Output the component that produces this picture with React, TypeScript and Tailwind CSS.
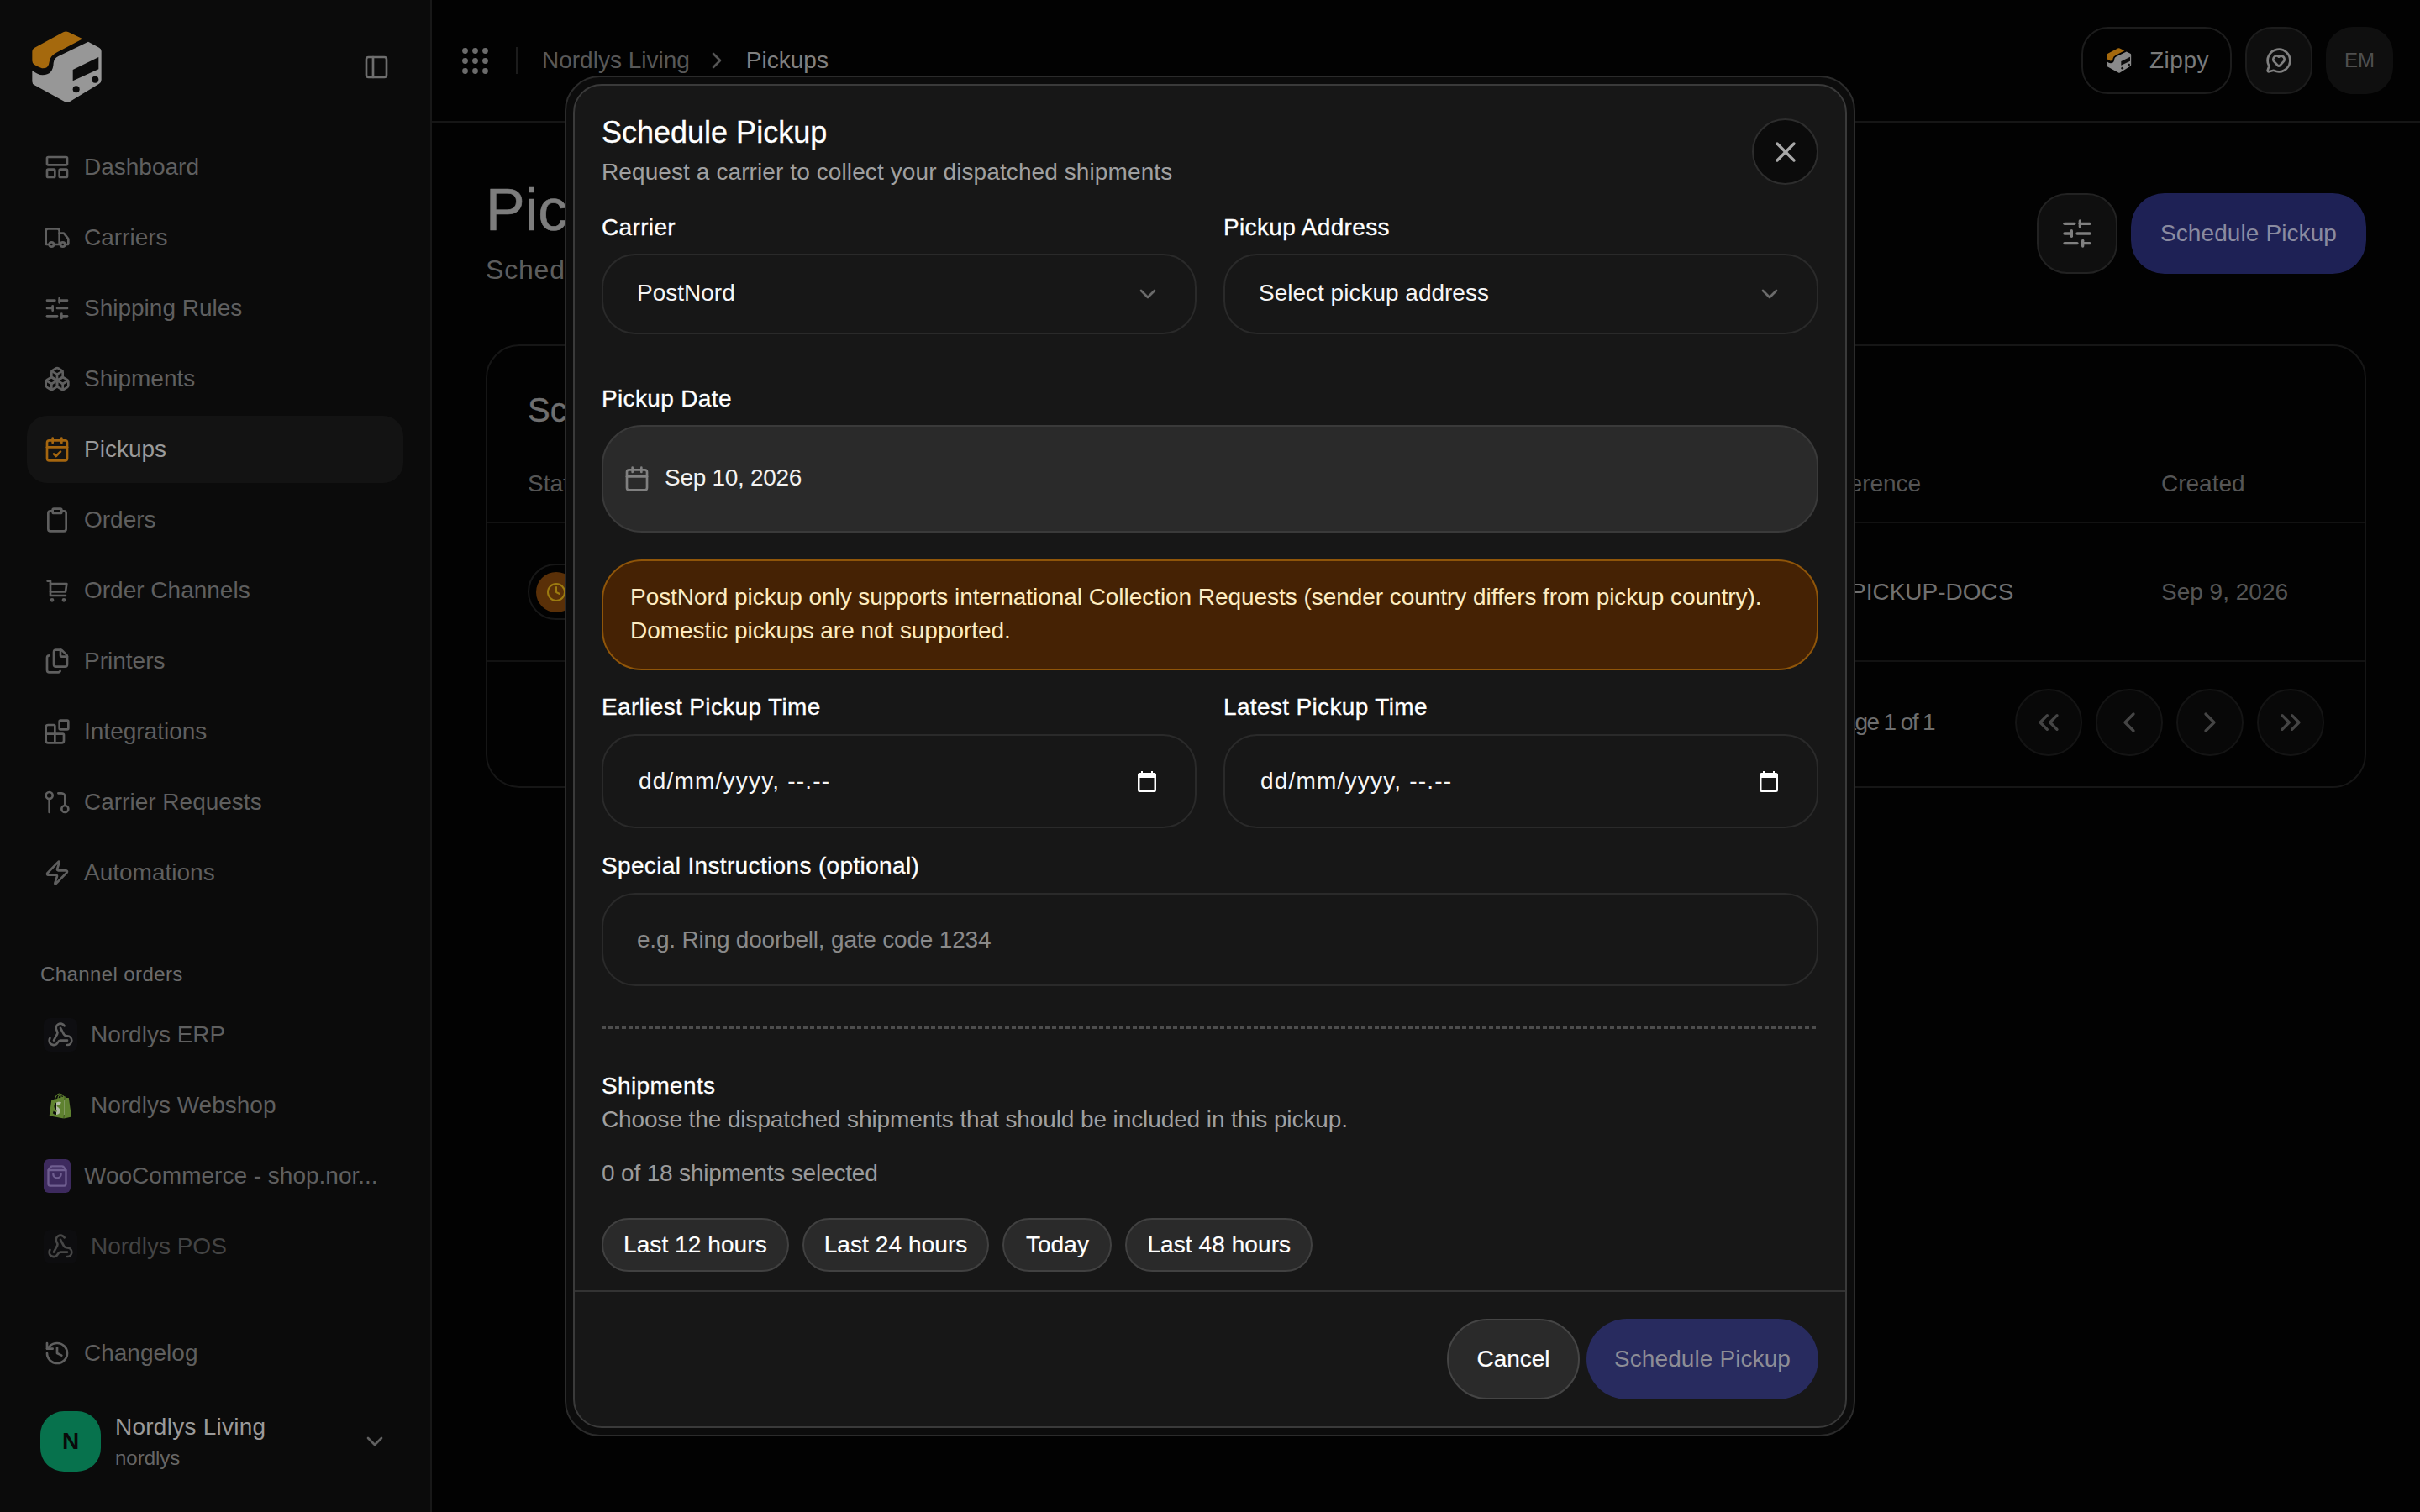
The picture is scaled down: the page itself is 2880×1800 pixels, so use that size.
import React from "react";
import {
  LayoutPanelTop, Truck, SlidersHorizontal, Boxes, CalendarCheck, Clipboard, Files, Blocks,
  Zap, History, Webhook, PanelLeft, ChevronDown, ChevronRight, ChevronLeft, ChevronsLeft,
  ChevronsRight, MessageCircleHeart, X, Calendar, Clock, ShoppingBag,
} from "lucide-react";
import { SiShopify } from "react-icons/si";

function Logo({ w, h, muted }: { w: number; h: number; muted?: boolean }) {
  return (
    <svg width={w} height={h} viewBox="114 112 252 258" className="shrink-0">
      <path d="M115 186 Q115 176 124 171 L226 116 Q235 111 245 116 L295 140 L205 187 Q178 200 176 222 Q174 246 150 245 Q132 238 122 231 Q115 226 115 218 Z" fill="#a5690d" />
      <path d="M315 150 L354 171 Q362 175 362 184 L362 286 Q362 295 354 300 L248 365 Q240 369 232 365 L123 305 Q115 301 115 292 L115 252 Q134 268 152 269 Q190 268 191 226 Q192 210 208 202 Z" fill={muted ? "#8a8a8a" : "#979797"} />
      <path d="M260 250 L352 205 L352 248 L260 290 Z" fill="#0b0b0b" />
      <circle cx="272" cy="320" r="12" fill="#0b0b0b" />
      <circle cx="340" cy="285" r="12" fill="#0b0b0b" />
    </svg>
  );
}

function NativeCalendar() {
  return (
    <svg width="22" height="25" viewBox="0 0 22 25" className="shrink-0" fill="#ffffff">
      <path
        fillRule="evenodd"
        d="M4 0h2v2h10V0h2v2h1.5A2.5 2.5 0 0 1 22 4.5v18a2.5 2.5 0 0 1-2.5 2.5h-17A2.5 2.5 0 0 1 0 22.5v-18A2.5 2.5 0 0 1 2.5 2H4V0zM2.5 8v14.5h17V8h-17z"
      />
    </svg>
  );
}

type IconProps = { size?: number; color?: string; className?: string };

function CartIcon({ size = 32, color = "currentColor", className }: IconProps) {
  return (
    <svg width={size} height={size} viewBox="0 0 24 24" fill="none" stroke={color} strokeWidth="2" strokeLinecap="round" strokeLinejoin="round" className={className}>
      <path d="M3.5 3.5H6v13h13.5" />
      <path d="M6 6h14.5l-1 7H6" />
      <circle cx="7.5" cy="20.5" r="0.8" />
      <circle cx="18" cy="20.5" r="0.8" />
    </svg>
  );
}

function RequestIcon({ size = 32, color = "currentColor", className }: IconProps) {
  return (
    <svg width={size} height={size} viewBox="0 0 24 24" fill="none" stroke={color} strokeWidth="2" strokeLinecap="round" strokeLinejoin="round" className={className}>
      <circle cx="5" cy="6" r="3" />
      <path d="M5 9v12" />
      <path d="M13 4h3a3 3 0 0 1 3 3v8" />
      <circle cx="19" cy="18" r="3" />
    </svg>
  );
}

const navItems = [
  { label: "Dashboard", Icon: LayoutPanelTop },
  { label: "Carriers", Icon: Truck },
  { label: "Shipping Rules", Icon: SlidersHorizontal },
  { label: "Shipments", Icon: Boxes },
  { label: "Pickups", Icon: CalendarCheck, active: true },
  { label: "Orders", Icon: Clipboard },
  { label: "Order Channels", Icon: CartIcon },
  { label: "Printers", Icon: Files },
  { label: "Integrations", Icon: Blocks },
  { label: "Carrier Requests", Icon: RequestIcon },
  { label: "Automations", Icon: Zap },
];

function Sidebar() {
  return (
    <aside className="flex h-full w-[514px] shrink-0 flex-col border-r-2 border-[#181818] bg-[#0b0b0b]">
      <div className="flex h-[159px] shrink-0 items-center justify-between pl-[38px] pr-[48px]">
        <Logo w={84} h={86} />
        <PanelLeft size={32} color="#6e6e6e" />
      </div>
      <nav className="flex flex-col gap-[4px] px-[32px]">
        {navItems.map(({ label, Icon, active }) => (
          <div
            key={label}
            className={`flex h-[80px] items-center gap-[16px] rounded-[24px] pl-[20px] text-[28px] ${
              active ? "bg-[#131313] text-[#9a9a9a]" : "text-[#5f5f5f]"
            }`}
          >
            <Icon size={32} color={active ? "#a5660f" : "#5f5f5f"} className="shrink-0" />
            <span>{label}</span>
          </div>
        ))}
      </nav>
      <div className="mt-[65px] pl-[48px] text-[24px] leading-[32px] tracking-[0.4px] text-[#6b6b6b]">Channel orders</div>
      <div className="mt-[16px] flex flex-col gap-[4px] px-[32px]">
        <div className="flex h-[80px] items-center gap-[16px] pl-[20px] text-[28px] text-[#5f5f5f]">
          <span className="flex h-[40px] w-[40px] items-center justify-center rounded-[8px] bg-[#0e0e11]">
            <Webhook size={32} color="#5f5f5f" />
          </span>
          <span>Nordlys ERP</span>
        </div>
        <div className="flex h-[80px] items-center gap-[21px] pl-[25px] text-[28px] text-[#5f5f5f]">
          <span className="relative flex h-[34px] w-[30px] shrink-0 items-center justify-center">
            <span className="absolute left-[10px] top-[10px] h-[18px] w-[11px] bg-[#b4bda8]" />
            <SiShopify size={33} color="#5f8230" className="relative" />
          </span>
          <span>Nordlys Webshop</span>
        </div>
        <div className="flex h-[80px] items-center gap-[16px] pl-[20px] text-[28px] text-[#5f5f5f]">
          <span className="flex h-[40px] w-[32px] shrink-0 items-center justify-center rounded-[6px] bg-[#3d2a5e]">
            <ShoppingBag size={28} color="#6f5e90" />
          </span>
          <span className="whitespace-nowrap">WooCommerce - shop.nor...</span>
        </div>
        <div className="flex h-[80px] items-center gap-[16px] pl-[20px] text-[28px] text-[#444444]">
          <span className="flex h-[40px] w-[40px] items-center justify-center rounded-[8px] bg-[#0d0d0f]">
            <Webhook size={32} color="#474747" />
          </span>
          <span>Nordlys POS</span>
        </div>
      </div>
      <div className="mt-auto px-[32px]">
        <div className="flex h-[80px] items-center gap-[16px] pl-[20px] text-[28px] text-[#5f5f5f]">
          <History size={32} color="#5f5f5f" />
          <span>Changelog</span>
        </div>
      </div>
      <div className="mb-[48px] mt-[29px] flex h-[72px] items-center pl-[48px] pr-[50px]">
        <span className="flex h-[72px] w-[72px] shrink-0 items-center justify-center rounded-[28px] bg-[#07724d] text-[28px] font-bold text-[#0a0a0a]">N</span>
        <div className="ml-[17px] flex-1 pt-[3px]">
          <div className="text-[28px] leading-[36px] tracking-[0.25px] text-[#9a9a9a]">Nordlys Living</div>
          <div className="mt-[1px] text-[24px] leading-[36px] text-[#666666]">nordlys</div>
        </div>
        <ChevronDown size={32} color="#606060" />
      </div>
    </aside>
  );
}

function TopBar() {
  return (
    <header className="flex h-[146px] shrink-0 items-center border-b-2 border-[#161616] pl-[36px] pr-[32px]">
      <svg width="31" height="31" viewBox="0 0 31 31" fill="#6b6b6b" className="shrink-0">
        {[3.5, 15.5, 27.5].map((cy) =>
          [3.5, 15.5, 27.5].map((cx) => <circle key={`${cx}-${cy}`} cx={cx} cy={cy} r="3.4" />),
        )}
      </svg>
      <span className="ml-[33px] h-[32px] w-[2px] bg-[#1c1c1c]" />
      <span className="ml-[29px] text-[28px] text-[#585858]">Nordlys Living</span>
      <ChevronRight size={32} color="#555555" className="ml-[16px]" />
      <span className="ml-[19px] text-[28px] text-[#808080]">Pickups</span>
      <div className="ml-auto flex items-center gap-[16px]">
        <div className="flex h-[80px] w-[179px] items-center rounded-[32px] border-2 border-[#1c1c1c] pl-[28px] text-[28px] text-[#7a7a7a]">
          <Logo w={30} h={30} muted />
          <span className="ml-[21px] tracking-[0.5px]">Zippy</span>
        </div>
        <div className="flex h-[80px] w-[80px] items-center justify-center rounded-[32px] border-2 border-[#1c1c1c] bg-[#0e0e0e]">
          <MessageCircleHeart size={32} color="#808080" />
        </div>
        <div className="flex h-[80px] w-[80px] items-center justify-center rounded-[32px] bg-[#0f0f0f] text-[24px] text-[#4f4f4f]">EM</div>
      </div>
    </header>
  );
}

function Content() {
  return (
    <main className="flex-1 px-[64px] pt-[64px]">
      <div className="flex items-start justify-between">
        <div className="pt-[2px]">
          <h1 className="text-[70px] leading-[76px] text-[#7d7d7d] [-webkit-text-stroke:0.6px_#7d7d7d]">Pickups</h1>
          <p className="mt-[13px] text-[32px] leading-[40px] tracking-[0.8px] text-[#5d5d5d]">Schedule carrier collections</p>
        </div>
        <div className="mt-[20px] flex gap-[16px]">
          <div className="flex h-[96px] w-[96px] items-center justify-center rounded-[36px] border-2 border-[#222222] bg-[#0f0f0f]">
            <SlidersHorizontal size={40} color="#808080" />
          </div>
          <div className="flex h-[96px] w-[280px] items-center justify-center rounded-[40px] bg-[#1e2155] text-[28px] tracking-[0.1px] text-[#8a8ba0]">Schedule Pickup</div>
        </div>
      </div>
      <section className="mt-[69px] h-[528px] rounded-[40px] border-2 border-[#161616]">
        <h2 className="pl-[48px] pt-[52px] text-[40px] leading-[48px] text-[#6f6f6f] [-webkit-text-stroke:0.4px_#6f6f6f]">Scheduled</h2>
        <div className="mt-[19px] grid h-[92px] grid-cols-[1529px_415px_1fr] items-center border-b-2 border-[#121212] pl-[48px] text-[28px] text-[#555555]">
          <span>Status</span>
          <span>Reference</span>
          <span>Created</span>
        </div>
        <div className="grid h-[165px] grid-cols-[1529px_415px_1fr] items-center border-b-2 border-[#121212] pl-[48px] text-[28px]">
          <span className="flex h-[67px] w-[140px] items-center rounded-full border-2 border-[#171717] pl-[8px]">
            <span className="flex h-[48px] w-[48px] items-center justify-center rounded-full bg-[#5a3008]">
              <Clock size={24} color="#9c7b10" />
            </span>
          </span>
          <span className="pl-[45px] text-[#707070]">PICKUP-DOCS</span>
          <span className="text-[#555555]">Sep 9, 2026</span>
        </div>
        <div className="flex h-[144px] items-center justify-end pr-[48px]">
          <span className="mr-[96px] text-[28px] tracking-[-1.6px] text-[#6e6e6e]">Page 1 of 1</span>
          <div className="flex gap-[16px]">
            {[ChevronsLeft, ChevronLeft, ChevronRight, ChevronsRight].map((Icon, i) => (
              <span key={i} className="flex h-[80px] w-[80px] items-center justify-center rounded-full border-2 border-[#141414] bg-[#080808]">
                <Icon size={40} color="#454545" />
              </span>
            ))}
          </div>
        </div>
      </section>
    </main>
  );
}

const labelCls = "text-[28px] leading-[40px] tracking-[0.35px] text-white [-webkit-text-stroke:0.3px_#ffffff]";

function SelectField({ label, value }: { label: string; value: string }) {
  return (
    <div className="flex flex-col gap-[11px]">
      <div className={labelCls}>{label}</div>
      <div className="flex h-[96px] items-center justify-between rounded-[40px] border-2 border-[#2a2a2a] pl-[40px] pr-[40px] text-[28px] text-[#f5f5f5]">
        <span className="-mt-[2px]">{value}</span>
        <ChevronDown size={32} color="#6b6b6b" />
      </div>
    </div>
  );
}

function DateTimeField({ label }: { label: string }) {
  return (
    <div className="flex flex-col gap-[12px]">
      <div className={labelCls}>{label}</div>
      <div className="flex h-[112px] items-center justify-between rounded-[40px] border-2 border-[#2a2a2a] pl-[42px] pr-[46px] text-[28px] tracking-[1.2px] text-[#f5f5f5]">
        <span>dd/mm/yyyy, --.--</span>
        <NativeCalendar />
      </div>
    </div>
  );
}

function Modal() {
  return (
    <div className="absolute left-[672px] top-[90px] h-[1620px] w-[1536px] rounded-[42px] border-2 border-[#2b2b2b] bg-[#0c0c0c] p-[8px]">
      <div className="flex h-full flex-col overflow-hidden rounded-[34px] border-2 border-[#3a3a3a] bg-[#171717]">
        <div className="min-h-0 flex-1 px-[32px] pt-[36px]">
          <div className="flex items-start justify-between">
            <div>
              <h2 className="text-[36px] leading-[40px] text-white [-webkit-text-stroke:0.3px_#ffffff]">Schedule Pickup</h2>
              <p className="mt-[7px] text-[28px] leading-[40px] tracking-[0.1px] text-[#a0a0a0]">Request a carrier to collect your dispatched shipments</p>
            </div>
            <button className="mt-[3px] flex h-[79px] w-[79px] items-center justify-center rounded-full border-2 border-[#2d2d2d] bg-[#0b0b0b]">
              <X size={40} color="#a8a8a8" />
            </button>
          </div>
          <div className="mt-[26px] grid grid-cols-2 gap-[32px]">
            <SelectField label="Carrier" value="PostNord" />
            <SelectField label="Pickup Address" value="Select pickup address" />
          </div>
          <div className="mt-[57px] flex flex-col gap-[11px]">
            <div className={labelCls}>Pickup Date</div>
            <div className="flex h-[128px] items-center rounded-[48px] border-2 border-[#3a3a3a] bg-[#2a2a2a] pl-[24px] text-[28px] tracking-[-0.3px] text-[#f2f2f2]">
              <Calendar size={32} color="#808080" />
              <span className="ml-[17px] -mt-[2px]">Sep 10, 2026</span>
            </div>
          </div>
          <div className="mt-[32px] h-[132px] rounded-[48px] border-2 border-[#8f5509] bg-[#452204] px-[32px] py-[23px] text-[28px] leading-[40px] tracking-[-0.05px] text-[#fdecc0]">
            PostNord pickup only supports international Collection Requests (sender country differs from pickup country).
            <br />
            Domestic pickups are not supported.
          </div>
          <div className="mt-[24px] grid grid-cols-2 gap-[32px]">
            <DateTimeField label="Earliest Pickup Time" />
            <DateTimeField label="Latest Pickup Time" />
          </div>
          <div className="mt-[25px] flex flex-col gap-[12px]">
            <div className={labelCls}>Special Instructions (optional)</div>
            <div className="flex h-[111px] items-center rounded-[40px] border-2 border-[#2a2a2a] pl-[40px] text-[28px] tracking-[-0.2px] text-[#8a8a8a]">
              e.g. Ring doorbell, gate code 1234
            </div>
          </div>
          <div className="mt-[47px] h-[4px] bg-[repeating-linear-gradient(90deg,#4d4d4d_0_5px,transparent_5px_8px)]" />
          <div className="mt-[48px] flex flex-col">
            <div className={labelCls}>Shipments</div>
            <div className="text-[28px] leading-[40px] tracking-[-0.1px] text-[#a0a0a0]">Choose the dispatched shipments that should be included in this pickup.</div>
            <div className="mt-[24px] text-[28px] leading-[40px] tracking-[-0.17px] text-[#9a9a9a]">0 of 18 shipments selected</div>
            <div className="mt-[33px] flex gap-[16px]">
              {["Last 12 hours", "Last 24 hours", "Today", "Last 48 hours"].map((t) => (
                <span key={t} className="flex h-[64px] min-w-[130px] items-center justify-center rounded-full border-2 border-[#414141] bg-[#2a2a2a] px-[24px] text-[28px] tracking-[0.08px] text-white [-webkit-text-stroke:0.2px_#ffffff]">
                  {t}
                </span>
              ))}
            </div>
          </div>
        </div>
        <div className="flex shrink-0 justify-end gap-[8px] border-t-2 border-[#333333] p-[32px]">
          <button className="flex h-[96px] w-[158px] items-center justify-center rounded-full border-2 border-[#454545] bg-[#2a2a2a] text-[28px] text-white [-webkit-text-stroke:0.2px_#ffffff]">Cancel</button>
          <button className="flex h-[96px] w-[276px] items-center justify-center rounded-full bg-[#282b5f] text-[28px] tracking-[0.1px] text-[#8d8d96]">Schedule Pickup</button>
        </div>
      </div>
    </div>
  );
}

export default function App() {
  return (
    <div className="relative flex h-[1800px] w-[2880px] overflow-hidden bg-[#020202] [font-family:'Liberation_Sans',Arial,sans-serif]">
      <Sidebar />
      <div className="flex min-w-0 flex-1 flex-col">
        <TopBar />
        <Content />
      </div>
      <Modal />
    </div>
  );
}
